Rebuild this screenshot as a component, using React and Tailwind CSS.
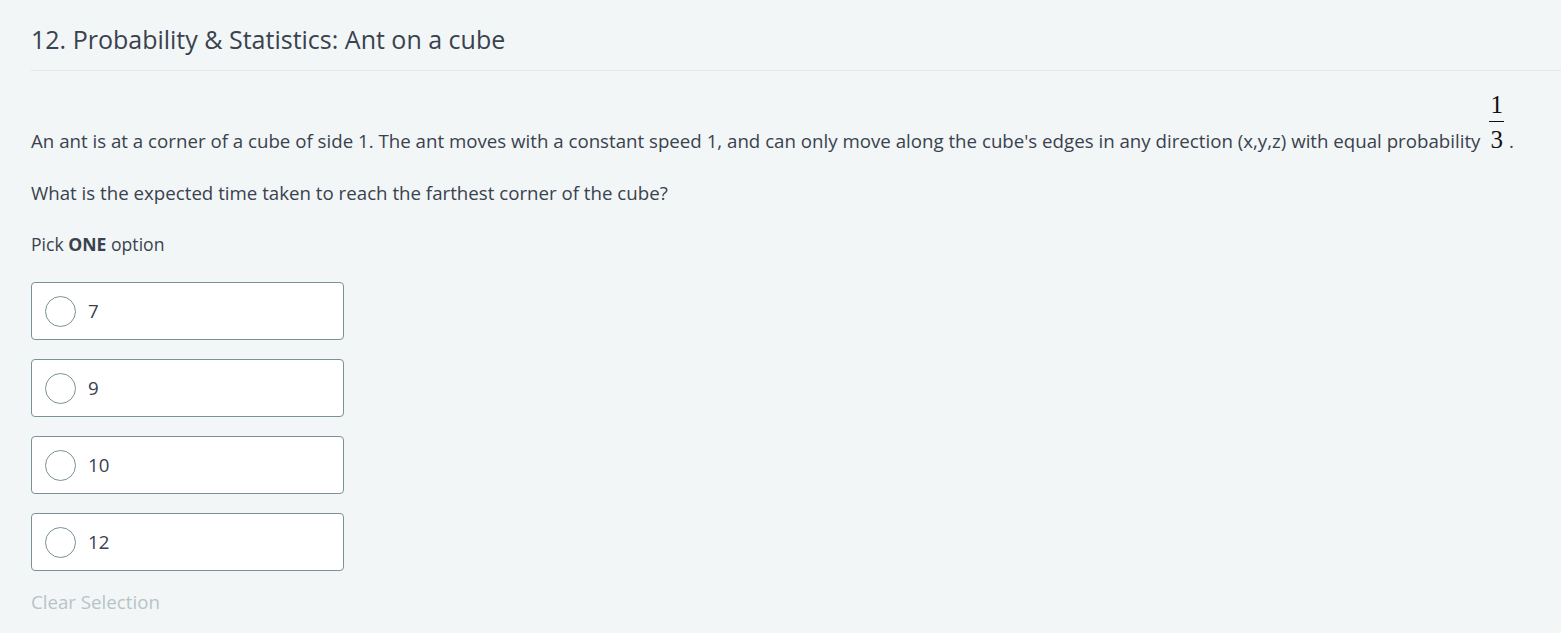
import React, { useState } from 'react';

const options = ['7', '9', '10', '12'];

const App = () => {
  const [selected, setSelected] = useState(null);

  return (
    <div className="min-h-screen bg-[#f3f6f7] text-[#39424e] font-['Open_Sans',sans-serif]">
      <div className="pl-[31px]">
        <h1 className="pt-[22px] pb-[14px] text-[25px] leading-[34px] border-b border-[#e3e8ea]">
          12. Probability &amp; Statistics: Ant on a cube
        </h1>

        <div className="pt-[22px] text-[18.7px] leading-[26px]">
          <p className="flex items-end">
            <span>
              An ant is at a corner of a cube of side 1. The ant moves with a constant speed 1, and can only move along the cube's edges in any direction (x,y,z) with equal probability
            </span>
            <span className="inline-flex flex-col items-center ml-[9px] mr-[5px] mb-[2px] font-['Liberation_Serif',serif] text-[25px] leading-[24px] text-[#111]">
              <span className="px-[1px] pb-[4px]">1</span>
              <span className="border-t-[1.5px] border-[#111] w-full text-center px-[1px] pt-[6px]">3</span>
            </span>
            <span>.</span>
          </p>
          <p className="mt-[26px]">What is the expected time taken to reach the farthest corner of the cube?</p>
        </div>

        <p className="mt-[25px] text-[17.6px] leading-[26px]">
          Pick <b className="font-bold">ONE</b> option
        </p>

        <div className="mt-[25px] flex flex-col gap-[19px]">
          {options.map((o, i) => (
            <button
              key={o}
              onClick={() => setSelected(i)}
              className="w-[313px] h-[58px] bg-white border border-[#7a9296] rounded-[4px] flex items-center pl-[13px] text-left"
            >
              <span className="w-[31px] h-[31px] rounded-full border border-[#7a9296] flex items-center justify-center">
                {selected === i && <span className="w-[15px] h-[15px] rounded-full bg-[#39424e]" />}
              </span>
              <span className="ml-[12px] text-[18.7px]">{o}</span>
            </button>
          ))}
        </div>

        <button
          onClick={() => setSelected(null)}
          className="mt-[17px] text-[18.7px] text-[#b7c4c7]"
        >
          Clear Selection
        </button>
      </div>
    </div>
  );
};

export default App;
